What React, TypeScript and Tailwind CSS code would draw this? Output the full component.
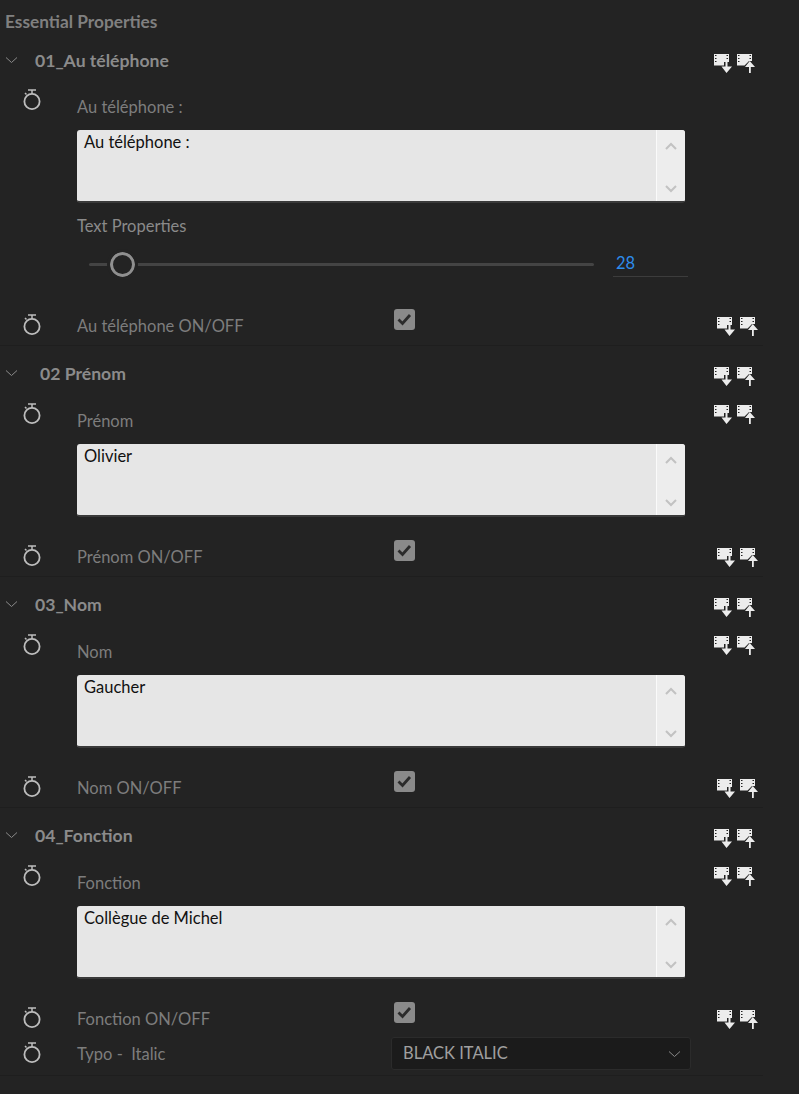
import React from "react";

const Chevron = () => (
  <svg width="14" height="8" viewBox="0 0 14 8" fill="none" className="shrink-0">
    <path d="M1 1.5 L6.5 6.5 L12 1.5" stroke="#8a8a8a" strokeWidth="1" />
  </svg>
);

const Stopwatch = () => (
  <svg width="20" height="23" viewBox="0 0 20 23" fill="none" className="shrink-0">
    <circle cx="10" cy="13.5" r="7.6" stroke="#bdbdbd" strokeWidth="1.8" />
    <path d="M6 2 H14 M10 2 V6 M4.5 6.5 L3 5" stroke="#bdbdbd" strokeWidth="1.5" />
  </svg>
);

const FilmDown = () => (
  <svg width="18" height="19" viewBox="0 0 18 19" className="shrink-0">
    <path d="M0 0 H15 V8 H10 V11.5 H0 Z" fill="#ececec" />
    <path d="M1 1.5 H2.5 M1 4.5 H2.5 M1 7.5 H2.5 M12.5 1.5 H14 M12.5 4.5 H14" stroke="#232323" strokeWidth="1.2" />
    <path d="M11.5 7 H13.5 V12.5 H18 L12.5 19 L7.5 12.5 H11.5 Z" fill="#ececec" />
  </svg>
);

const FilmUp = () => (
  <svg width="18" height="19" viewBox="0 0 18 19" className="shrink-0">
    <path d="M0 0 H15 V7 H12 L7.5 11.5 H0 Z" fill="#ececec" />
    <path d="M1 1.5 H2.5 M1 4.5 H2.5 M1 7.5 H2.5 M12.5 1.5 H14 M12.5 4.5 H14" stroke="#232323" strokeWidth="1.2" />
    <path d="M12.8 7 L18 13 H13.8 V19 H12 V13 H8 Z" fill="#ececec" />
  </svg>
);

const KeyIcons = ({ className }: { className: string }) => (
  <div className={`flex gap-[5px] ${className}`}>
    <FilmDown />
    <FilmUp />
  </div>
);

const Header = ({ title, indent }: { title: string; indent: string }) => (
  <div className="flex h-[56px] items-start">
    <div className="ml-[5px] mt-[23px] flex w-[14px]">
      <Chevron />
    </div>
    <div className={`mt-[16px] text-[17.6px] leading-[24px] font-bold text-[#8b8b8b] ${indent}`}>
      {title}
    </div>
    <KeyIcons className="ml-auto mr-[8px] mt-[21px]" />
  </div>
);

const TextBox = ({ value }: { value: string }) => (
  <div className="ml-[77px] flex h-[73px] w-[608px] overflow-hidden rounded-[3px] border-b-2 border-b-[#3a3a3a] bg-[#e6e6e6]">
    <div className="flex-1 px-[7px] text-[16.5px] leading-[24px] text-[#111111]">{value}</div>
    <div className="flex w-[29px] flex-col items-center justify-between border-l border-l-[#fafafa] bg-[#ededed] pt-[12px] pb-[8px]">
      <svg width="12" height="8" viewBox="0 0 12 8" fill="none">
        <path d="M1 7 L6 2 L11 7" stroke="#c2c2c2" strokeWidth="2" />
      </svg>
      <svg width="12" height="8" viewBox="0 0 12 8" fill="none">
        <path d="M1 1 L6 6 L11 1" stroke="#c2c2c2" strokeWidth="2" />
      </svg>
    </div>
  </div>
);

const Checkbox = () => (
  <div className="flex h-[21px] w-[21px] items-center justify-center rounded-[3px] bg-[#8a8a8a]">
    <svg width="15" height="13" viewBox="0 0 15 13" fill="none">
      <path d="M1.5 6.5 L5.5 10.5 L13 2" stroke="#2b2b2b" strokeWidth="2.8" />
    </svg>
  </div>
);

const ToggleRow = ({ label }: { label: string }) => (
  <div className="flex h-[37px] items-start">
    <div className="ml-[22px] mt-[5px] w-[55px]">
      <Stopwatch />
    </div>
    <div className="mt-[6px] w-[317px] text-[16.5px] leading-[24px] text-[#7d7d7d]">{label}</div>
    <div className="mt-[1px]">
      <Checkbox />
    </div>
    <KeyIcons className="ml-[302px] mt-[9px]" />
  </div>
);

const Field = ({ label, keys }: { label: string; keys: boolean }) => (
  <div className="flex h-[42px] items-start">
    <div className="ml-[22px] w-[55px]">
      <Stopwatch />
    </div>
    <div className="mt-[7px] text-[16.5px] leading-[24px] text-[#7d7d7d]">{label}</div>
    {keys && <KeyIcons className="ml-auto mr-[8px] mt-[3px]" />}
  </div>
);

const Section = ({ children }: { children: React.ReactNode }) => (
  <div className="mr-[36px] border-b border-b-[#1e1e1e]">{children}</div>
);

const boxes = [
  { head: "02 Prénom", label: "Prénom", value: "Olivier" },
  { head: "03_Nom", label: "Nom", value: "Gaucher" },
];

export default function App() {
  return (
    <div className="h-[1094px] w-[799px] overflow-hidden bg-[#232323] font-['Lato',sans-serif]">
      <div className="h-[46px] pl-[5px] pt-[10px] text-[17.3px] leading-[24px] font-bold text-[#808080]">
        Essential Properties
      </div>

      <Section>
        <div className="-mt-[13px]">
          <Header title="01_Au téléphone" indent="ml-[16px]" />
        </div>
        <div className="-mt-[1px]">
          <Field label="Au téléphone :" keys={false} />
        </div>
        <TextBox value="Au téléphone :" />
        <div className="ml-[77px] mt-[11px] text-[16.5px] leading-[24px] text-[#8a8a8a]">Text Properties</div>
        <div className="mt-[10px] flex h-[32px] items-center pl-[89px]">
          <div className="relative h-[3px] w-[505px] rounded-full bg-[#444444]">
            <div className="absolute left-[21px] top-[-11px] h-[25px] w-[25px] rounded-full border-[3px] border-[#8f8f8f] bg-[#232323] outline-[3px] outline-[#232323]" />
          </div>
          <div className="ml-[19px] h-[26px] w-[75px] border-b border-b-[#3c3c3c] pl-[3px] text-[16.5px] leading-[24px] text-[#2d8ceb]">
            28
          </div>
        </div>
        <div className="mt-[28px]">
          <ToggleRow label="Au téléphone ON/OFF" />
        </div>
      </Section>

      {boxes.map((s) => (
        <Section key={s.head}>
          <Header title={s.head} indent={s.head === "02 Prénom" ? "ml-[21px]" : "ml-[16px]"} />
          <Field label={s.label} keys={true} />
          <TextBox value={s.value} />
          <div className="mt-[22px]">
            <ToggleRow label={`${s.label} ON/OFF`} />
          </div>
        </Section>
      ))}

      <Section>
        <Header title="04_Fonction" indent="ml-[16px]" />
        <Field label="Fonction" keys={true} />
        <TextBox value="Collègue de Michel" />
        <div className="mt-[22px]">
          <ToggleRow label="Fonction ON/OFF" />
        </div>
        <div className="flex h-[37px] items-start">
          <div className="ml-[22px] mt-[3px] w-[55px]">
            <Stopwatch />
          </div>
          <div className="mt-[4px] w-[314px] text-[16.5px] leading-[24px] whitespace-pre text-[#7d7d7d]">Typo -  Italic</div>
          <div className="-mt-[1px] flex h-[33px] w-[300px] items-center justify-between rounded-[3px] border border-[#2b2b2b] bg-[#1b1b1b] pl-[11px] pr-[8px] text-[16.5px] text-[#a0a0a0]">
            BLACK ITALIC
            <Chevron />
          </div>
        </div>
      </Section>
    </div>
  );
}
